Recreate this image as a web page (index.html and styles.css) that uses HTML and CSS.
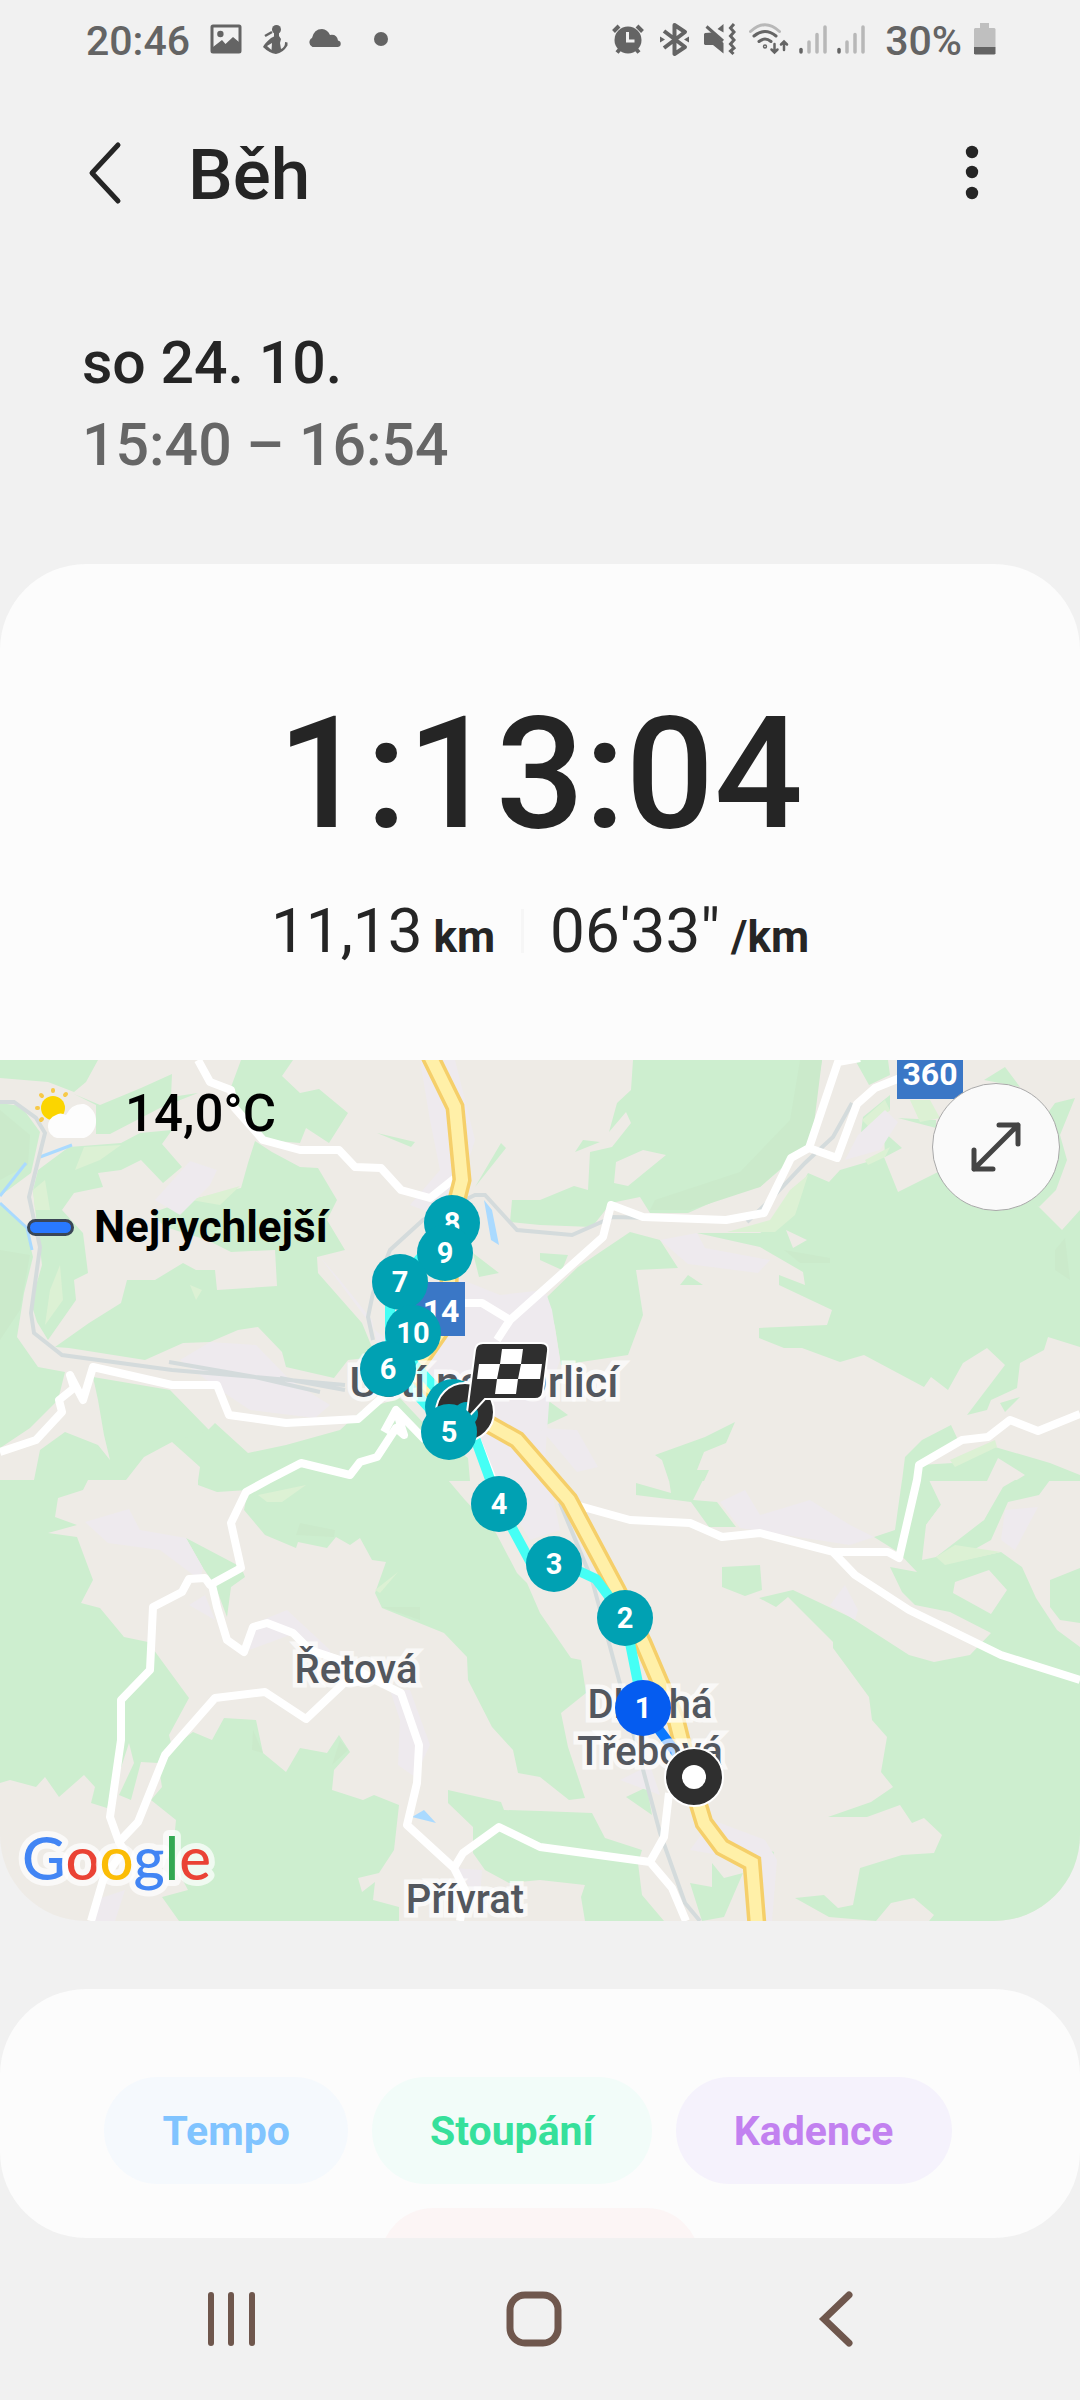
FILE: index.html
```html
<!DOCTYPE html>
<html lang="cs">
<head>
    <meta charset="UTF-8">
    <meta name="viewport" content="width=device-width, initial-scale=1.0">
    <title>Běh</title>
    <link rel="stylesheet" href="styles.css">
</head>
<body>
    <div class="status-bar">
        <div class="status-left">
            <span class="status-time">20:46</span>
            <svg width="32" height="36" viewBox="0 0 32 36"><rect x="2" y="5" width="28" height="26" rx="1" fill="none" stroke="currentColor" stroke-width="3"/><circle cx="10.400" cy="13" r="3.200"/><path d="M3 26l9-7 3.500 4 7.500-7 6 5v10H3z"/></svg>
            <svg width="26" height="36" viewBox="0 0 26 36"><circle cx="14.500" cy="8.500" r="4.500"/><path d="M12 12h5v4h-5z"/><path d="M3 15l7-4" stroke="currentColor" stroke-width="2.500"/><path fill-rule="evenodd" d="M9 17l4-2h4l2 3-1 4 1 6q4-2 4-6v-1l2.500.500v3Q21 32 14 33 7 32 1 26q1-3 8-9zM5 25l4.500 4 .500-7z"/></svg>
            <svg width="34" height="36" viewBox="0 0 34 36"><path d="M4.500 26A5 5 0 0 1 4 17Q6 8 14 8q5.500.500 8 6 7-1 8 5.500A3.300 3.300 0 0 1 30 26z"/></svg>
            <svg width="28" height="36" viewBox="0 0 28 36"><circle cx="19" cy="18" r="7"/></svg>
        </div>
        <div class="status-right">
            <svg width="36" height="36" viewBox="0 0 36 36"><circle cx="17" cy="19" r="13.500"/><path d="M2.500 10.500L8 5M26 5l5.500 5.500M6 31.500L9 28M28 31.500L25 28" stroke="currentColor" stroke-width="4"/><path d="M16.500 11v9h7" fill="none" stroke="#f1f1f1" stroke-width="3"/></svg>
            <svg width="36" height="36" viewBox="0 0 36 36"><path d="M7 10l21 16-10.500 7V4L28 11 7 27" fill="none" stroke="currentColor" stroke-width="4" stroke-linejoin="round"/><path d="M3 15.500l5 3-5 3zM32 15.500l-5 3 5 3z"/></svg>
            <svg width="36" height="36" viewBox="0 0 36 36"><path d="M1 13l1-1 7-.500L20.500 22v10.500L10 24H2l-1-1zM14.500 8l6-5v8.500z"/><path d="M3.500 5.500L20 20" stroke="currentColor" stroke-width="3"/><path d="M31 3l-3.500 4 3.500 4-3.500 4 3.500 4-3.500 4 3.500 4-3.500 3 3 3" fill="none" stroke="currentColor" stroke-width="3"/></svg>
            <svg class="outline" width="40" height="36" viewBox="0 0 40 36"><path d="M1.500 10.500Q16-3 30.500 10.500" stroke="#b8b8b8"/><path d="M5 15q11-9 22 0M10 20.500q6-5 12 0"/><circle cx="16" cy="25.500" r=".700"/><path d="M25.500 23v8M22.500 28.500l3 3 3-3M35 29v-8M32 23.500l3-3 3 3" stroke-width="2.500"/></svg>
            <svg width="28" height="36" viewBox="0 0 28 36" stroke-width="3.500" stroke-linecap="round"><path d="M10 21v10M18 13.500V31M26 6v25" stroke="#b8b8b8"/><path d="M2 28.500V31" stroke="currentColor"/></svg>
            <svg width="28" height="36" viewBox="0 0 28 36" stroke-width="3.500" stroke-linecap="round"><path d="M10 21v10M18 13.500V31M26 6v25" stroke="#b8b8b8"/><path d="M2 28.500V31" stroke="currentColor"/></svg>
            <span class="status-battery">30%</span>
            <svg width="22" height="36" viewBox="0 0 22 36"><path d="M6 2h9v5h5.500l1 1v18H0V8l1-1h5z" fill="#bfbfbf"/><path d="M0 26h21.500v6.500l-1 1H1l-1-1z"/></svg>
        </div>
    </div>

    <header class="app-bar">
        <button class="icon-button" aria-label="Zpět">
            <svg width="36" height="64" viewBox="0 0 36 64"><path d="M32 4L6 32l26 28" fill="none" stroke="currentColor" stroke-width="5" stroke-linecap="round" stroke-linejoin="round"/></svg>
        </button>
        <h1>Běh</h1>
        <button class="icon-button" aria-label="Další možnosti">
            <svg width="16" height="64" viewBox="0 0 16 64"><circle cx="8" cy="11" r="6.200"/><circle cx="8" cy="31" r="6.200"/><circle cx="8" cy="52" r="6.200"/></svg>
        </button>
    </header>

    <main>
        <section class="date">
            <p>so 24. 10.</p>
            <p class="date-time">15:40 – 16:54</p>
        </section>

        <section class="summary">
            <p class="duration">1:13:04</p>
            <div class="stats">
                <p class="stat">11,13<span class="unit"> km</span></p>
                <div class="divider"></div>
                <p class="stat">06'33"<span class="unit"> /km</span></p>
            </div>
        </section>

        <section class="map">
            <svg class="map-canvas" viewBox="0 0 1080 861">
                <!-- lesy -->
                <g class="forest">
                    <path d="M0 0H98L86 22 74 32 48 22 0 18z"/>
                    <path d="M74 34L100 45 141 28 172 14 171 37 198 33 160 48 110 74 96 74 96 45z"/>
                    <path d="M0 43L21 46 40 72 31 113 0 136z"/>
                    <path d="M69 87L121 83 140 73 172 70 162 84 182 107 163 123 141 100 121 110 98 113 103 127 74 133 62 150 83 173 88 213 74 220 76 240 48 280 37 262 31 243 42 205 37 165 33 130 38 110z"/>
                    <path d="M55 287L89 263 121 243 127 220 155 220 183 203 196 210 215 210 217 230 277 226 275 190 231 192 207 180 165 167 151 153 189 140 241 128 248 103 255 81 272 92 300 107 318 108 337 140 327 160 345 190 317 197 318 213 362 263 376 297 348 300 334 318 286 307 282 292 258 267 238 270 210 282 183 283 145 300 69 288z"/>
                    <path d="M241 0H293L282 16 300 33 319 29 348 53 329 83 306 68 300 83 265 80 238 53 231 27z"/>
                    <path d="M0 143L26 168 33 197 24 233 17 277 38 307 65 312 58 340 30 368 0 388z"/>
                    <path d="M93 317L170 330 209 370 209 382 172 382 144 397 126 420 34 420 40 390 65 372 98 385 110 400 104 375 98 340z"/>
                    <path d="M206 372L215 363 248 393 286 385 340 370 362 350 400 338 430 370 468 398 470 421 198 421 200 407 172 382z"/>
                    <path d="M0 420H88L83 430 58 438 55 457 77 465 48 473 77 477 93 520 81 543 100 548 124 577 148 582 189 638 169 675 172 687 193 672 212 680 224 658 256 660 263 693 286 712 300 688 327 693 339 675 350 692 334 710 332 730 363 740 374 735 399 745 394 790 379 813 358 818 362 832 375 822 373 840 399 847V861H179L162 837 188 830 172 800 176 760 151 740 162 727 158 703 141 702 131 740 119 735 134 703 129 683 117 720 107 748 91 743 95 727 84 715 59 737 45 717 36 727 10 720 0 723z"/>
                    <path d="M198 420H448L465 440 496 473 517 513 527 523 540 553 571 598 581 600 586 633 561 653 568 687 585 738 569 740 540 717 518 713 513 690 492 667 468 620 467 597 444 573 382 548 375 533 386 502 372 500 360 478 350 485 336 477 327 488 298 482 296 488 265 475 244 450 248 430 217 432 198 425z"/>
                    <path d="M186 478L241 507 245 517 231 527 227 557 215 525 203 508z"/>
                    <path d="M448 730L501 742 504 750 540 751 592 753 605 778 642 790 638 803 642 835 664 861H585L581 837 585 825 540 820 509 823 485 810 473 793 473 767 448 743z"/>
                    <path d="M626 737L647 727 652 755zM690 823L712 827V803L724 818 743 813 724 857 702 861zM743 782L774 792 772 800 747 793z"/>
                    <path d="M722 507L760 505 762 530 745 536 722 527z"/>
                    <path d="M759 538L793 530 850 557 909 595 934 602 970 595 991 573 950 552 915 545 902 532 890 507 917 512 898 492 874 477 895 470 902 420H929L941 445 926 465 922 500 936 497 984 460 1003 427 1015 420H1050L1039 435 1008 442 991 480 950 503 1001 492 1022 507 1036 538 1057 570 1080 587V861H876L829 857 795 838 824 835 838 848 853 845 860 808 902 795 934 793 942 775 924 758 912 763 900 745 867 757 828 757 871 742 893 727 881 712 887 677 872 660 869 637 833 588 833 582 788 537 776 547z"/>
                    <path d="M1050 520L1080 508V563L1060 560 1050 547zM636 423L671 433 669 420H703L693 440 717 442 736 467H709L691 442 636 435z"/>
                    <path d="M633 0H822L815 40 812 80 788 103 760 127 740 130 688 153H650L640 137 611 143 592 167 540 165 510 162 512 140H540L574 126 588 130 590 92 612 87 631 63 626 52 609 72 617 43 631 30z"/>
                    <path d="M630 172L660 180 678 208 636 210 643 255 628 295 561 305 555 267 547 237 578 207z"/>
                    <path d="M697 173H760L781 160 808 113 829 122 840 110 884 97 898 132 936 113 960 105 1020 130 1039 147 1062 170 1080 150V287L1048 277 1044 290 1020 303 1017 328 991 340 987 350 967 355 1005 305 987 288 963 303 948 330 931 317 924 327 864 295 840 302 802 288H784L759 278V268L827 265 832 250 779 225V215L805 225 803 212 760 187z"/>
                    <path d="M1055 43L1075 38 1060 75 1067 100 1056 130 1039 147 1000 120zM855 0H888L890 15 869 25zM1005 7L1020 27 984 20zM860 80L863 57 890 35V50L870 65zM884 72L902 88 885 97zM898 58L936 60V68z"/>
                    <path d="M655 395L705 377 735 362 726 383 704 392 697 410H709L704 421H669L662 400z"/>
                    <path d="M520 378L540 347 550 342 568 355 540 368zM902 421L905 397 922 380 951 365 958 380 920 405 915 421z"/>
                    <path d="M917 421L920 405 953 403 995 387 1050 403 1080 415V421H1015L1025 415 998 398 987 421zM1000 343L1020 337 1005 352z"/>
                    <path d="M680 225L688 215 703 225zM575 92L583 80 600 82zM540 193L568 195 562 210 540 200zM377 73L415 82 411 87zM475 127L501 83 506 88zM473 193L499 213 479 217z"/>
                </g>
                <!-- paseky uvnitř lesů -->
                <g class="clearing">
                    <path d="M616 102L643 90 666 95 628 126 614 123zM786 170L807 180 793 188zM955 522L989 510 1007 530 991 554 953 533zM876 861L891 843 914 838 934 855 929 861zM941 421L1003 421 984 460 940 480 926 465 941 445z"/>
                </g>
                <g class="forest-dark">
                    <path d="M0 50L30 75 28 105 0 120zM0 190L30 195 20 250 0 280zM800 0H822L812 80 760 127 690 150 650 150 655 140 740 112 790 60zM300 463L335 470 334 477 296 475zM382 547L420 547 420 560zM253 670L263 693 252 690zM340 680L348 690 332 705zM1055 190L1065 178 1070 220 1055 210zM784 190L830 198V203H800z"/>
                </g>
                <g class="meadow">
                    <path d="M33 130L45 120 50 150 35 150zM84 87L121 85 100 100 75 110zM191 140L240 126 220 145zM50 230L60 205 63 240 45 265zM258 435L306 425 282 442H267zM727 172L770 160 790 130 808 115 800 140 795 155 775 172zM862 60L885 40 890 50 870 68zM865 100L890 87 885 97 868 105zM910 40L930 40 940 58 920 62zM936 497L955 485 1001 492 945 505zM950 400L995 380 997 387 955 407zM190 225L202 230 196 240zM375 530L398 512 380 533z"/>
                </g>
                <!-- zástavba -->
                <g class="town">
                    <path d="M320 197L340 220 372 260 380 300 430 330 470 385 500 430 530 480 560 470 545 400 550 330 560 300 552 250 545 230 500 235 450 215 430 260 400 290 375 270z"/>
                    <path d="M155 140L190 101 217 110 210 125 180 155zM180 300L210 282 256 285 290 320 330 345 315 358 250 350 220 330zM540 368L577 370 598 407 577 412zM85 462L129 449 140 470 186 478 203 508 200 520 160 490 108 483zM189 545L205 535 215 560zM244 592L250 565 287 550 330 590 330 602 290 575zM390 630L410 630 430 685 415 717 398 705 400 660z"/>
                    <path d="M420 0H455L475 80 450 160 410 145 440 110 430 60zM660 180L697 173 705 188 770 200 758 213 688 204zM885 50L898 62 880 90 845 100 858 75zM720 442L745 430 760 455 810 440 850 465 874 477 850 485 740 468zM690 790L712 760 765 780 777 800 772 861H750L747 800zM830 545L845 525 858 550 855 560zM1005 450L1038 447 1015 490 1001 480zM95 840L125 830 115 861H92zM455 808L482 810 480 840zM620 720L650 705 660 735z"/>
                </g>
                <g class="water">
                    <path d="M484 140L492 150 499 185 491 180zM412 757L424 750 436 763z"/>
                    <path class="stream" d="M0 136L26 103M40 97L72 85M0 143L27 168 32 190"/>
                </g>
                <path class="rail" d="M0 42H14L36 58 45 73 29 137 40 187 31 253 34 273 62 295 172 310 255 317 345 325M169 302L255 317 320 332M280 318L345 330M373 280L368 257 373 233 390 190 423 160 475 135H485L517 170 572 175 613 157 650 158M747 162L770 140 805 103 833 77 852 43M560 443L592 520 619 620 660 773 685 843 700 861"/>
                <g class="road">
                    <path d="M198 0L210 22 231 30 234 47 263 80 300 90H339L355 107 381 108 401 130 430 138 455 118"/>
                    <path d="M0 392L36 380 62 352 59 340 74 328 70 315 83 340 93 307 172 325 217 325 229 355 286 363 358 359 385 335"/>
                    <path d="M425 380L396 350 384 372M396 350L404 375 396 368 377 397 360 402 350 415 301 403 268 420 246 432 231 463 241 508 210 525 205 518 189 519 182 532 153 547 150 610 121 640V680L110 757 119 782 124 790 103 820 91 861"/>
                    <path d="M119 782L138 762 165 695 215 638 265 632 306 659 344 623 375 620 401 633 419 685 417 723 407 765 454 808 463 793 499 767 540 787 650 802 664 777 669 733M454 808L465 830 460 861M650 802L672 828 686 861"/>
                    <path d="M212 525L217 547 227 580 244 592 253 567 267 563 293 573 310 590 340 600 375 620"/>
                    <path d="M576 445L630 460 690 463 722 477 760 473 833 492 888 492 899 498 917 420 919 405 962 380 988 377 1010 360 1038 371 1080 354M833 492L855 515 909 550 1001 595 1080 620"/>
                    <path d="M497 280L510 260 603 177 611 145 643 157 726 160 764 153 791 98 809 88 838 2 860 -2M809 88L837 98 857 44 875 28 900 18M465 243H482L510 260M477 380L495 425"/>
                </g>
                <path class="highway-edge" d="M430 -4L455 47 462 120 457 140 450 190 448 260 420 300 412 312 450 345 485 362 517 380 569 440 617 530 643 583 676 660 691 720 704 763 722 787 752 803 757 865"/>
                <path class="highway" d="M430 -4L455 47 462 120 457 140 450 190 448 260 420 300 412 312 450 345 485 362 517 380 569 440 617 530 643 583 676 660 691 720 704 763 722 787 752 803 757 865"/>

                <!-- trasa běhu -->
                <path class="track" d="M451 163L400 221 390 240V305L449 370M410 300L453 347M449 371L475 378 499 444 524 490 532 505 555 500 596 519 625 558 643 648"/>
                <path class="track-fast" d="M643 648L694 717"/>

                <g class="shield">
                    <rect x="408" y="222" width="57" height="54"/>
                    <text x="441" y="262">14</text>
                    <rect x="897" y="-15" width="66" height="54"/>
                    <text x="930" y="25">360</text>
                </g>
                <g class="place">
                    <text class="place-city" x="484" y="337">Ústí nad Orlicí</text>
                    <text x="356" y="623">Řetová</text>
                    <text x="465" y="853">Přívrat</text>
                    <text x="650" y="658">Dlouhá</text>
                    <text x="650" y="705">Třebová</text>
                </g>
                <text class="google" x="22" y="820"><tspan class="g-blue">G</tspan><tspan class="g-red">o</tspan><tspan class="g-yellow">o</tspan><tspan class="g-blue">g</tspan><tspan class="g-green">l</tspan><tspan class="g-red">e</tspan></text>

                <!-- kilometry -->
                <g class="km">
                    <circle cx="694" cy="717" r="29" class="end-dot"/>
                    <circle cx="694" cy="717" r="12" fill="#fff"/>
                    <circle cx="643" cy="648" r="28" class="km-fast"/><text x="643" y="658">1</text>
                    <circle cx="625" cy="558" r="28"/><text x="625" y="568">2</text>
                    <circle cx="554" cy="504" r="28"/><text x="554" y="514">3</text>
                    <circle cx="499" cy="444" r="28"/><text x="499" y="454">4</text>
                    <circle cx="452" cy="163" r="28"/><text x="452" y="173">8</text>
                    <circle cx="445" cy="193" r="28"/><text x="445" y="203">9</text>
                    <circle cx="400" cy="222" r="28"/><text x="400" y="232">7</text>
                    <circle cx="413" cy="273" r="28"/><text x="413" y="283">10</text>
                    <circle cx="388" cy="309" r="28"/><text x="388" y="319">6</text>
                    <circle cx="453" cy="347" r="28"/>
                    <circle cx="465" cy="352" r="29" class="end-dot"/>
                    <circle cx="466" cy="354" r="12"/>
                    <path class="end-dot" d="M475 290q1-7 8-7h58q8 0 7 8l-5 41q-1 7-8 7h-50l-19 21z"/>
                    <path fill="#fff" d="M502 289h21l-2 15h21l-2 15h-22l-2 15h-21l2-15h-20l2-15h21z"/>
                    <path class="end-dot-square" d="M500 304h21l-3 15h-21z"/>
                    <circle cx="449" cy="372" r="28"/><text x="449" y="382">5</text>
                </g>
            </svg>

            <div class="map-info">
                <svg width="64" height="52" viewBox="0 0 64 52"><g stroke="#f7c948" stroke-width="4" stroke-linecap="round"><path d="M18 2v1M6 7l1 1M30 7l1-1M2 20h1M6 32l1-1"/></g><circle cx="18" cy="20" r="12" fill="#fbd500"/><path d="M22 50a12 12 0 0 1-1-23q4-3 10 0 6-12 18-11a18 18 0 0 1 0 34z" fill="#fdfdfd"/></svg>
                <span class="temperature">14,0°C</span>
            </div>
            <div class="map-legend">
                <span class="legend-line"></span>
                <span>Nejrychlejší</span>
            </div>
            <button class="expand" aria-label="Zvětšit mapu">
                <svg width="52" height="52" viewBox="0 0 52 52"><path d="M4 48L48 4M29 4h19v19M4 29v19h19" fill="none" stroke="#444" stroke-width="5" stroke-linecap="round" stroke-linejoin="round"/></svg>
            </button>
        </section>

        <section class="charts">
            <div class="chips">
                <button class="chip chip-pace">Tempo</button>
                <button class="chip chip-climb">Stoupání</button>
                <button class="chip chip-cadence">Kadence</button>
            </div>
            <div class="chips-more">
                <div class="chip chip-heart"></div>
            </div>
        </section>
    </main>

    <nav class="nav-bar">
        <button aria-label="Poslední aplikace">
            <svg width="54" height="58" viewBox="0 0 54 58"><path d="M6 5v48M26 5v48M47 5v48" stroke="currentColor" stroke-width="6" stroke-linecap="round"/></svg>
        </button>
        <button aria-label="Domů">
            <svg width="56" height="58" viewBox="0 0 56 58"><rect x="4" y="5" width="48" height="48" rx="15" fill="none" stroke="currentColor" stroke-width="7"/></svg>
        </button>
        <button aria-label="Zpět">
            <svg width="36" height="58" viewBox="0 0 36 58"><path d="M31 5L6 29l25 24" fill="none" stroke="currentColor" stroke-width="7" stroke-linecap="round"/></svg>
        </button>
    </nav>
</body>
</html>
```
FILE: styles.css
```css
* {
    box-sizing: border-box;
    margin: 0;
    padding: 0;
}

body {
    font-family: Roboto, sans-serif;
    background-color: #f1f1f1;
    color: #252525;
}

button {
    background: none;
    border: none;
    color: inherit;
    font: inherit;
    cursor: pointer;
}

svg {
    display: block;
    flex: none;
    fill: currentColor;
}

/* stavový řádek */
.status-bar {
    display: flex;
    justify-content: space-between;
    padding: 21px 84px 0 86px;
    color: #646464;
    font-size: 41px;
    font-weight: 500;
    line-height: 40px;
}

.status-left {
    display: flex;
    gap: 20px;
}

.status-right {
    display: flex;
    gap: 10px;
}

.status-battery {
    margin: 0 2px 0 10px;
}

.outline {
    fill: none;
    stroke: currentColor;
    stroke-width: 3;
    stroke-linecap: round;
}

.app-bar {
    display: flex;
    align-items: center;
    padding: 68px 100px 0 86px;
}

.app-bar h1 {
    flex: 1;
    margin-left: 66px;
    padding-top: 4px;
    font-size: 71px;
    font-weight: 500;
    line-height: 84px;
}

.date {
    padding: 105px 82px 78px;
    font-size: 59px;
    font-weight: 500;
    line-height: 82px;
}

.date-time {
    color: #666;
}

.summary {
    background-color: #fcfcfc;
    border-radius: 86px 86px 0 0;
    padding: 122px 40px 93px;
    text-align: center;
}

.duration {
    font-size: 156px;
    font-weight: 500;
    line-height: 176px;
}

.stats {
    display: flex;
    align-items: center;
    justify-content: center;
    gap: 26px;
    margin-top: 33px;
}

.stat {
    font-size: 62px;
    line-height: 72px;
}

.divider {
    width: 3px;
    height: 44px;
    background-color: #f6f6f6;
}

.unit {
    font-size: 44px;
    font-weight: 700;
    line-height: 44px;
}

/* mapa */
.map {
    position: relative;
    overflow: hidden;
    border-radius: 0 0 86px 86px;
    background-color: #eeebe6;
    color: #000;
}

.map-canvas {
    width: 100%;
    height: auto;
}

.forest {
    fill: #cdeecf;
}

.clearing {
    fill: #eeebe6;
}

.forest-dark {
    fill: #cbeacb;
}

.meadow {
    fill: #dcf1d4;
}

.town {
    fill: #eeeaee;
}

.water {
    fill: #aadaff;
}

.stream {
    fill: none;
    stroke: #aadaff;
    stroke-width: 3;
}

.rail {
    fill: none;
    stroke: #d4dbdc;
    stroke-width: 4;
}

.road {
    fill: none;
    stroke: #fff;
    stroke-width: 8;
    stroke-linejoin: round;
}

.highway-edge,
.highway {
    fill: none;
    stroke: #f5cf6a;
    stroke-width: 19;
}

.highway {
    stroke: #fff0a8;
    stroke-width: 12;
}

.track,
.track-fast {
    fill: none;
    stroke: #45fff5;
    stroke-width: 10;
    stroke-linejoin: round;
}

.track-fast {
    stroke: #0a78ff;
}

.shield {
    fill: #3a77c6;
}

.shield text {
    fill: #fff;
    font-size: 32px;
    font-weight: 700;
    text-anchor: middle;
}

.place {
    fill: #53575e;
    stroke: rgba(255, 255, 255, 0.7);
    stroke-width: 9;
    paint-order: stroke;
    font-size: 40px;
    font-weight: 500;
    text-anchor: middle;
}

.place-city {
    font-size: 43px;
}

.google {
    font-family: Lato, sans-serif;
    font-size: 60px;
    font-weight: 500;
    stroke: rgba(255, 255, 255, 0.7);
    stroke-width: 12;
    stroke-linejoin: round;
    paint-order: stroke;
}

.g-blue {
    fill: #4285f4;
}

.g-red {
    fill: #ea4335;
}

.g-yellow {
    fill: #fbbc05;
}

.g-green {
    fill: #34a853;
}

.km {
    fill: #00a1b3;
}

.km text {
    fill: #fff;
    font-size: 29px;
    font-weight: 700;
    text-anchor: middle;
}

.km-fast {
    fill: #055cf0;
}

.end-dot {
    fill: #2f2f2f;
    stroke: #fff;
    stroke-width: 2;
}

.end-dot-square {
    fill: #2f2f2f;
}

.map-info,
.map-legend {
    position: absolute;
    display: flex;
    align-items: center;
}

.map-info {
    top: 22px;
    left: 35px;
    gap: 26px;
    font-size: 51px;
    font-weight: 500;
    line-height: 64px;
}

.map-legend {
    top: 142px;
    left: 27px;
    gap: 20px;
    font-size: 44px;
    font-weight: 700;
    line-height: 50px;
}

.legend-line {
    width: 47px;
    height: 17px;
    border: 3px solid #3a4657;
    border-radius: 9px;
    background-color: #2979ff;
}

.expand {
    position: absolute;
    top: 23px;
    right: 20px;
    display: flex;
    align-items: center;
    justify-content: center;
    width: 128px;
    height: 128px;
    border: 1px solid #a8a8a8;
    border-radius: 50%;
    background-color: #fafafa;
}

/* přepínače grafů */
.charts {
    margin-top: 68px;
    padding-top: 88px;
    border-radius: 86px;
    background-color: #fcfcfc;
    overflow: hidden;
}

.chips {
    display: flex;
    justify-content: center;
}

.chip {
    height: 107px;
    margin-right: 24px;
    padding: 0 58px;
    border-radius: 54px;
    font-size: 41px;
    font-weight: 700;
}

.chip-pace {
    background-color: #f5f9fd;
    color: #80c4ff;
}

.chip-climb {
    background-color: #f2fcf9;
    color: #36e09b;
}

.chip-cadence {
    background-color: #f5f2fc;
    color: #c281f0;
}

.chips-more {
    height: 30px;
    margin-top: 24px;
    overflow: hidden;
}

.chip-heart {
    width: 320px;
    margin: 0 auto;
    background-color: #fcf5f5;
}

.nav-bar {
    display: grid;
    grid-template-columns: repeat(3, 1fr);
    padding: 0 93px 0 81px;
    color: #6f574d;
}

.nav-bar button {
    display: flex;
    align-items: center;
    justify-content: center;
    height: 162px;
}
```
